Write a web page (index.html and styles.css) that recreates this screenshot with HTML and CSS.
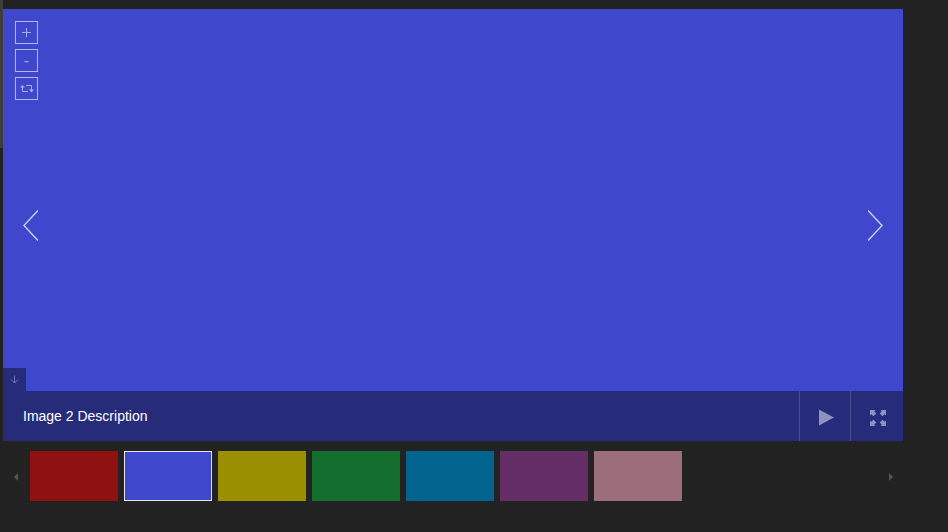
FILE: index.html
```html
<!DOCTYPE html>
<html lang="en">
<head>
    <meta charset="UTF-8">
    <title>Gallery</title>
    <link rel="stylesheet" href="styles.css">
</head>
<body>
    <div class="edge"></div>
    <div class="gallery">
        <div class="stage">
            <div class="zoom-tools">
                <button class="tool">
                    <svg width="9" height="9" viewBox="0 0 9 9" fill="none" stroke="currentColor">
                        <path d="M0 4.5H9M4.5 0V9" />
                    </svg>
                </button>
                <button class="tool">-</button>
                <button class="tool">
                    <svg width="14" height="10" viewBox="0 0 14 10" fill="none" stroke="currentColor">
                        <path d="M2.5 3V7.5H8" />
                        <path d="M6 1.5H11.5V6" />
                        <path d="M0 3.5H5L2.5 1zM9 5.5H14L11.5 8.5z" fill="currentColor" stroke="none" />
                    </svg>
                </button>
            </div>
            <svg class="arrow arrow-prev" width="15" height="31" viewBox="0 0 15 31" fill="none" stroke="currentColor" stroke-width="1.3">
                <path d="M15 0.5L0.9 15.5L15 30.5" />
            </svg>
            <svg class="arrow arrow-next" width="15" height="31" viewBox="0 0 15 31" fill="none" stroke="currentColor" stroke-width="1.3">
                <path d="M0 0.5L14.1 15.5L0 30.5" />
            </svg>
            <div class="caption-toggle">
                <svg width="9" height="9" viewBox="0 0 9 9" fill="none" stroke="currentColor" stroke-width="0.8">
                    <path d="M4.5 0.5V8M1 4.5L4.5 8L8 4.5" />
                </svg>
            </div>
        </div>
        <div class="caption">
            <span class="caption-text">Image 2 Description</span>
            <div class="caption-btn">
                <svg width="15" height="17" viewBox="0 0 15 17" fill="currentColor">
                    <path d="M0 0.5L15 8.5L0 16.5z" />
                </svg>
            </div>
            <div class="caption-btn">
                <svg width="16" height="16" viewBox="0 0 16 16" fill="currentColor">
                    <path d="M0 0H5.5L4.2 1.3L6.3 3.4L3.4 6.3L1.3 4.2L0 5.5z" />
                    <path d="M16 0H10.5L11.8 1.3L9.7 3.4L12.6 6.3L14.7 4.2L16 5.5z" />
                    <path d="M0 16H5.5L4.2 14.7L6.3 12.6L3.4 9.7L1.3 11.8L0 10.5z" />
                    <path d="M16 16H10.5L11.8 14.7L9.7 12.6L12.6 9.7L14.7 11.8L16 10.5z" />
                </svg>
            </div>
        </div>
    </div>
    <div class="thumbs">
        <span class="thumb-arrow thumb-arrow-prev"></span>
        <div class="thumb red"></div>
        <div class="thumb blue active"></div>
        <div class="thumb olive"></div>
        <div class="thumb green"></div>
        <div class="thumb teal"></div>
        <div class="thumb purple"></div>
        <div class="thumb pink"></div>
        <span class="thumb-arrow thumb-arrow-next"></span>
    </div>
</body>
</html>
```

FILE: styles.css
```css
html, body {
    height: 100%;
}

body {
    margin: 0;
    padding: 9px 0 0 3px;
    box-sizing: border-box;
    overflow: hidden;
    background-color: #222222;
    font-family: "Liberation Sans", Arial, sans-serif;
}

.edge {
    position: absolute;
    left: 0;
    top: 0;
    width: 3px;
    height: 148px;
    background-color: #3d3d3d;
}

.gallery {
    width: 900px;
}

.stage {
    position: relative;
    height: 382px;
    background-color: #3f48cc;
}

.zoom-tools {
    position: absolute;
    left: 12px;
    top: 12px;
    display: flex;
    flex-direction: column;
    gap: 5px;
}

.tool {
    display: flex;
    align-items: center;
    justify-content: center;
    width: 23px;
    height: 23px;
    padding: 0;
    border: 1px solid #b2b6ea;
    background: transparent;
    color: #a9ade6;
    font-family: "Liberation Sans", Arial, sans-serif;
    font-size: 16px;
    font-weight: 400;
}

.arrow {
    position: absolute;
    top: 201px;
    color: #d4d6f4;
}

.arrow-prev {
    left: 20px;
}

.arrow-next {
    right: 20px;
}

.caption-toggle {
    position: absolute;
    left: 0;
    bottom: 0;
    display: flex;
    align-items: center;
    justify-content: center;
    width: 23px;
    height: 23px;
    background-color: #262b7a;
    color: #8a8db8;
}

.caption {
    display: flex;
    align-items: center;
    height: 50px;
    background-color: #262b7a;
}

.caption-text {
    flex: 1;
    padding-left: 20px;
    color: #ffffff;
    font-size: 14px;
}

.caption-btn {
    display: flex;
    align-items: center;
    justify-content: center;
    width: 51px;
    height: 100%;
    padding: 3px 0 0 2px;
    box-sizing: border-box;
    border-left: 1px solid #4a4e8f;
    color: #8e91c2;
}

.caption-btn:last-child {
    width: 53px;
}

.thumbs {
    display: flex;
    align-items: center;
    gap: 6px;
    width: 900px;
    height: 50px;
    margin-top: 10px;
    padding-left: 27px;
    box-sizing: border-box;
    position: relative;
}

.thumb {
    width: 88px;
    height: 50px;
    box-sizing: border-box;
}

.thumb.active {
    border: 1px solid #e6e6e6;
}

.red { background-color: #8f1111; }
.blue { background-color: #3f48cc; }
.olive { background-color: #998f00; }
.green { background-color: #136d2d; }
.teal { background-color: #00648f; }
.purple { background-color: #642d66; }
.pink { background-color: #9c6d7a; }

.thumb-arrow {
    position: absolute;
    top: 22px;
    width: 0;
    height: 0;
    border-top: 4px solid transparent;
    border-bottom: 4px solid transparent;
}

.thumb-arrow-prev {
    left: 11px;
    border-right: 4px solid #555555;
}

.thumb-arrow-next {
    right: 10px;
    border-left: 4px solid #555555;
}
```
